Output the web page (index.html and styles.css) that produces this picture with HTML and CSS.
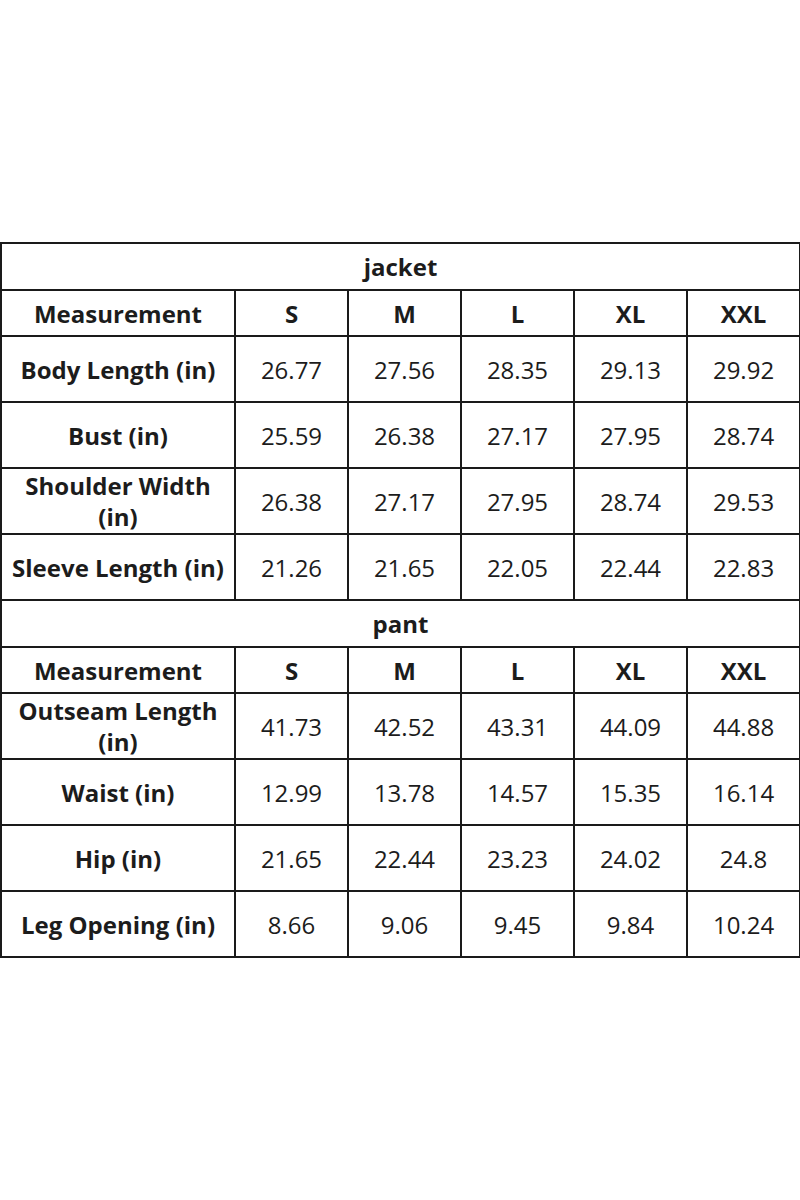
FILE: index.html
```html
<!DOCTYPE html>
<html>
<head>
<meta charset="utf-8">
<link rel="stylesheet" href="styles.css">
</head>
<body>
<div class="page">
<table class="size-table">
  <colgroup>
    <col class="c-label"><col class="c-size"><col class="c-size"><col class="c-size"><col class="c-size"><col class="c-size">
  </colgroup>
  <tbody>
    <tr class="r-title"><th colspan="6">jacket</th></tr>
    <tr class="r-head"><th>Measurement</th><th>S</th><th>M</th><th>L</th><th>XL</th><th>XXL</th></tr>
    <tr class="r-data"><th>Body Length (in)</th><td>26.77</td><td>27.56</td><td>28.35</td><td>29.13</td><td>29.92</td></tr>
    <tr class="r-data"><th>Bust (in)</th><td>25.59</td><td>26.38</td><td>27.17</td><td>27.95</td><td>28.74</td></tr>
    <tr class="r-data"><th>Shoulder Width (in)</th><td>26.38</td><td>27.17</td><td>27.95</td><td>28.74</td><td>29.53</td></tr>
    <tr class="r-data"><th>Sleeve Length (in)</th><td>21.26</td><td>21.65</td><td>22.05</td><td>22.44</td><td>22.83</td></tr>
    <tr class="r-title"><th colspan="6">pant</th></tr>
    <tr class="r-head"><th>Measurement</th><th>S</th><th>M</th><th>L</th><th>XL</th><th>XXL</th></tr>
    <tr class="r-data"><th>Outseam Length (in)</th><td>41.73</td><td>42.52</td><td>43.31</td><td>44.09</td><td>44.88</td></tr>
    <tr class="r-data"><th>Waist (in)</th><td>12.99</td><td>13.78</td><td>14.57</td><td>15.35</td><td>16.14</td></tr>
    <tr class="r-data"><th>Hip (in)</th><td>21.65</td><td>22.44</td><td>23.23</td><td>24.02</td><td>24.8</td></tr>
    <tr class="r-data"><th>Leg Opening (in)</th><td>8.66</td><td>9.06</td><td>9.45</td><td>9.84</td><td>10.24</td></tr>
  </tbody>
</table>
</div>
</body>
</html>
```
FILE: styles.css
```css
html, body {
  margin: 0;
  padding: 0;
  background: #ffffff;
}
.page {
  width: 800px;
  padding-top: 242px;
}
.size-table {
  width: 800px;
  border-collapse: collapse;
  table-layout: fixed;
  font-family: "Open Sans", "Noto Sans", sans-serif;
  font-size: 24px;
  color: #1c1c1c;
}
.c-label { width: 234px; }
.c-size { width: 113px; }
.size-table th,
.size-table td {
  border: 2px solid #1a1a1a;
  text-align: center;
  vertical-align: middle;
  padding: 0 4px;
  line-height: 31px;
}
.size-table th { font-weight: 700; }
.size-table td { font-weight: 400; }
.r-title { height: 47px; }
.r-head { height: 46px; }
.r-data { height: 66px; }
```
